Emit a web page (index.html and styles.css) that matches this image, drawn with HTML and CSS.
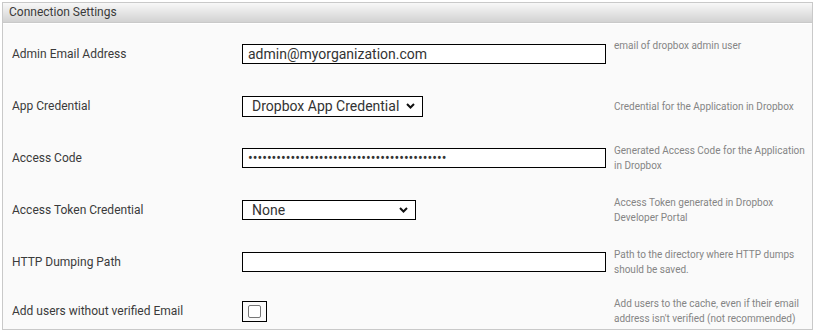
FILE: index.html
```html
<!DOCTYPE html>
<html lang="en">
<head>
    <meta charset="UTF-8">
    <title>Connection Settings</title>
    <link rel="stylesheet" href="styles.css">
</head>
<body>
    <div class="panel">
        <div class="panel-head">Connection Settings</div>
        <div class="panel-body">
            <div class="row">
                <label class="label" for="adminEmail">Admin Email Address</label>
                <div class="control"><input class="text wide" id="adminEmail" type="text" value="admin@myorganization.com"></div>
                <div class="hint hint-top">email of dropbox admin user</div>
            </div>

            <div class="row">
                <label class="label" for="appCred">App Credential</label>
                <div class="control">
                    <span class="select-wrap app">
                        <select class="select" id="appCred"><option>Dropbox App Credential</option></select>
                        <svg class="chevron" width="9" height="6" viewBox="0 0 9 6"><path d="M1 1l3.5 3.5L8 1" fill="none" stroke="#111" stroke-width="2"/></svg>
                    </span>
                </div>
                <div class="hint">Credential for the Application in Dropbox</div>
            </div>

            <div class="row">
                <label class="label" for="accessCode">Access Code</label>
                <div class="control"><input class="text wide" id="accessCode" type="password" value="xxxxxxxxxxxxxxxxxxxxxxxxxxxxxxxxxxxxxxxxxx"></div>
                <div class="hint">Generated Access Code for the Application in Dropbox</div>
            </div>

            <div class="row">
                <label class="label" for="tokenCred">Access Token Credential</label>
                <div class="control">
                    <span class="select-wrap token">
                        <select class="select" id="tokenCred"><option>None</option></select>
                        <svg class="chevron" width="9" height="6" viewBox="0 0 9 6"><path d="M1 1l3.5 3.5L8 1" fill="none" stroke="#111" stroke-width="2"/></svg>
                    </span>
                </div>
                <div class="hint">Access Token generated in Dropbox Developer Portal</div>
            </div>

            <div class="row">
                <label class="label" for="dumpPath">HTTP Dumping Path</label>
                <div class="control"><input class="text wide" id="dumpPath" type="text" value=""></div>
                <div class="hint">Path to the directory where HTTP dumps should be saved.</div>
            </div>

            <div class="row last">
                <label class="label" for="unverified">Add users without verified Email</label>
                <div class="control"><span class="check-wrap"><input class="check" id="unverified" type="checkbox"></span></div>
                <div class="hint">Add users to the cache, even if their email address isn't verified (not recommended)</div>
            </div>
        </div>
    </div>
</body>
</html>
```

FILE: styles.css
```css
* {
    margin: 0;
    padding: 0;
    box-sizing: border-box;
}

body {
    font-family: Roboto, "Liberation Sans", sans-serif;
    background: #fff;
    color: #333;
}

.panel {
    margin: 2px 3px 0 2px;
    width: 811px;
    height: 328px;
    border: 1px solid #c9c9c9;
    background: #fafafa;
    overflow: hidden;
}

.panel-head {
    height: 20px;
    padding-left: 6px;
    font-size: 12px;
    line-height: 19px;
    color: #3a3a3a;
    background: linear-gradient(#f8f8f8, #d2d2d2);
    border-bottom: 1px solid #c9c9c9;
}

.panel-body {
    border-top: 1px solid #fff;
    padding-top: 4px;
}

.row {
    display: grid;
    grid-template-columns: 239px 372px 1fr;
    align-items: center;
    height: 52px;
}

.row.last {
    height: 41px;
    padding-top: 5px;
}

.label {
    padding-left: 9px;
    font-size: 12px;
    color: #3a3a3a;
}

.control {
    display: flex;
    align-items: center;
}

.text {
    height: 20px;
    border: 1px solid #000;
    background: #fff;
    padding: 0 5px;
    font-family: Roboto, "Liberation Sans", sans-serif;
    font-size: 14px;
    color: #333;
    outline: none;
}

.text.wide {
    width: 364px;
}

.select-wrap {
    position: relative;
    display: inline-block;
}

.select {
    appearance: none;
    -webkit-appearance: none;
    height: 20px;
    border: 1px solid #000;
    border-radius: 0;
    background: #fff;
    padding: 0 20px 0 9px;
    font-family: Roboto, "Liberation Sans", sans-serif;
    font-size: 14px;
    color: #333;
    display: block;
}

.select-wrap.app .select {
    width: 181px;
    height: 21px;
}

.select-wrap.token .select {
    width: 174px;
}

.chevron {
    position: absolute;
    right: 8px;
    top: 7px;
    pointer-events: none;
}

.check-wrap {
    display: inline-flex;
    align-items: center;
    justify-content: center;
    width: 25px;
    height: 21px;
    border: 1px solid #000;
    background: #fafafa;
}

.check {
    appearance: none;
    -webkit-appearance: none;
    width: 13px;
    height: 13px;
    border: 1px solid #767676;
    border-radius: 2px;
    background: #fff;
}

.hint {
    padding-right: 2px;
    font-size: 10px;
    line-height: 15px;
    color: #858585;
}

.hint-top {
    align-self: start;
    margin-top: 10px;
}
```
